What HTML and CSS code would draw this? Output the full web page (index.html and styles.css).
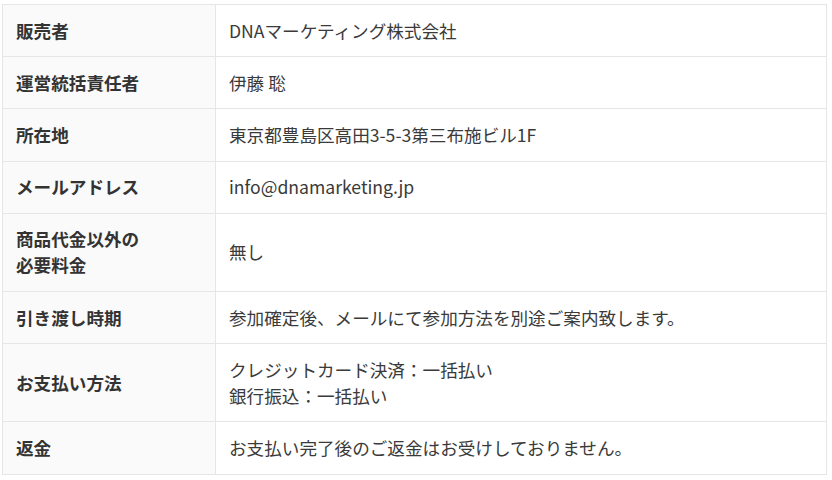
FILE: index.html
```html
<!DOCTYPE html>
<html lang="ja">
<head>
<meta charset="UTF-8">
<meta name="viewport" content="width=device-width, initial-scale=1.0">
<title>特定商取引法に基づく表記</title>
<link rel="stylesheet" href="styles.css">
</head>
<body>
<div class="wrap">
    <table class="tokusho">
        <tr>
            <th>販売者</th>
            <td>DNAマーケティング株式会社</td>
        </tr>
        <tr>
            <th>運営統括責任者</th>
            <td>伊藤 聡</td>
        </tr>
        <tr>
            <th>所在地</th>
            <td>東京都豊島区高田3-5-3第三布施ビル1F</td>
        </tr>
        <tr>
            <th>メールアドレス</th>
            <td>info@dnamarketing.jp</td>
        </tr>
        <tr>
            <th>商品代金以外の<br>必要料金</th>
            <td>無し</td>
        </tr>
        <tr>
            <th>引き渡し時期</th>
            <td>参加確定後、メールにて参加方法を別途ご案内致します。</td>
        </tr>
        <tr>
            <th>お支払い方法</th>
            <td>クレジットカード決済：一括払い<br>銀行振込：一括払い</td>
        </tr>
        <tr>
            <th>返金</th>
            <td>お支払い完了後のご返金はお受けしておりません。</td>
        </tr>
    </table>
</div>
</body>
</html>
```

FILE: styles.css
```css
/* 特商法テーブル */
body {
    margin: 0;
    padding: 0;
    background-color: #fff;
    font-family: "Noto Sans CJK JP", "Noto Sans", sans-serif;
    color: #333;
}

.wrap {
    padding: 4px 5px 5px 2px;
}

.tokusho {
    width: 825px;
    border-collapse: collapse;
    border: 1px solid #e6e6e6;
    font-size: 17.6px;
    line-height: 26px;
}

.tokusho th,
.tokusho td {
    border: 1px solid #e6e6e6;
    padding: 12.6px 13px;
    text-align: left;
    vertical-align: middle;
}

.tokusho th {
    width: 186px;
    background-color: #fafafa;
    font-weight: bold;
    color: #333;
}

.tokusho td {
    background-color: #fff;
    font-weight: normal;
    color: #3a3a3a;
}
```
